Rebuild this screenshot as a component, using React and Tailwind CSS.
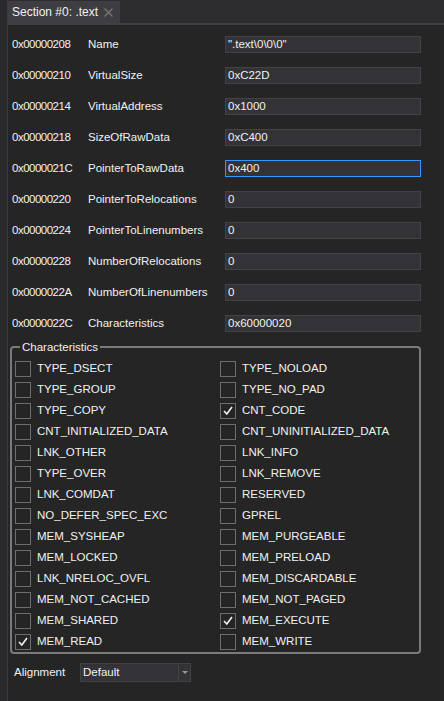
import React from 'react';

const fields = [
  ["0x00000208", "Name", "\".text\\0\\0\\0\""],
  ["0x00000210", "VirtualSize", "0xC22D"],
  ["0x00000214", "VirtualAddress", "0x1000"],
  ["0x00000218", "SizeOfRawData", "0xC400"],
  ["0x0000021C", "PointerToRawData", "0x400", true],
  ["0x00000220", "PointerToRelocations", "0"],
  ["0x00000224", "PointerToLinenumbers", "0"],
  ["0x00000228", "NumberOfRelocations", "0"],
  ["0x0000022A", "NumberOfLinenumbers", "0"],
  ["0x0000022C", "Characteristics", "0x60000020"],
];

const flags = [
  ["TYPE_DSECT", false, "TYPE_NOLOAD", false],
  ["TYPE_GROUP", false, "TYPE_NO_PAD", false],
  ["TYPE_COPY", false, "CNT_CODE", true],
  ["CNT_INITIALIZED_DATA", false, "CNT_UNINITIALIZED_DATA", false],
  ["LNK_OTHER", false, "LNK_INFO", false],
  ["TYPE_OVER", false, "LNK_REMOVE", false],
  ["LNK_COMDAT", false, "RESERVED", false],
  ["NO_DEFER_SPEC_EXC", false, "GPREL", false],
  ["MEM_SYSHEAP", false, "MEM_PURGEABLE", false],
  ["MEM_LOCKED", false, "MEM_PRELOAD", false],
  ["LNK_NRELOC_OVFL", false, "MEM_DISCARDABLE", false],
  ["MEM_NOT_CACHED", false, "MEM_NOT_PAGED", false],
  ["MEM_SHARED", false, "MEM_EXECUTE", true],
  ["MEM_READ", true, "MEM_WRITE", false],
];

const Check = ({ label, checked }) => (
  <div className="flex items-center h-[21px]">
    <div className="w-[16px] h-[16px] border border-[#6e6e6e] flex items-center justify-center">
      {checked && (
        <svg width="10" height="9" viewBox="0 0 10 9">
          <path d="M1 5 L3.8 8 L9 1" fill="none" stroke="#f1f1f1" strokeWidth="1.6" />
        </svg>
      )}
    </div>
    <span className="ml-[6px]">{label}</span>
  </div>
);

const App = () => {
  return (
    <div
      className="w-[444px] h-[701px] bg-[#252526] text-[#f1f1f1] text-[11.5px] flex overflow-hidden"
      style={{ fontFamily: '"Segoe UI", "Liberation Sans", sans-serif' }}
    >
      {/* left dock edge */}
      <div className="w-[8px] bg-[#2a2a2c] border-r border-[#3a3a3d] shrink-0" />

      <div className="flex-1 flex flex-col">
        {/* tab strip */}
        <div className="h-[25px] bg-[#2d2d30] border-b-2 border-[#3f3f46] flex items-end">
          <div className="h-[22px] w-[112px] bg-[#3e3e42] flex items-center pl-[4px] pr-[7px]">
            <span className="flex-1 leading-none text-[12px]">Section #0: .text</span>
            <svg width="9" height="9" viewBox="0 0 9 9">
              <path d="M0.5 0.5 L8.5 8.5 M8.5 0.5 L0.5 8.5" stroke="#77777b" strokeWidth="1.2" />
            </svg>
          </div>
        </div>

        {/* header fields */}
        <div className="pt-[4px]">
          {fields.map(([off, name, val, focus]) => (
            <div key={off} className="h-[31px] flex items-center">
              <span className="w-[80px] pl-[4px] tracking-[-0.5px]">{off}</span>
              <span className="w-[137px]">{name}</span>
              <div
                className={`w-[196px] h-[17px] bg-[#333337] border flex items-center pl-[2px] ${
                  focus ? 'border-[#3399ff]' : 'border-[#434346]'
                }`}
              >
                {val}
              </div>
            </div>
          ))}
        </div>

        {/* characteristics group */}
        <fieldset className="ml-[2px] w-[411px] mt-0 border-2 border-[#7a7a7a] rounded-[4px] pl-[3px] pb-0">
          <legend className="ml-[5px] px-[2px] leading-[16px]">Characteristics</legend>
          <div className="grid grid-cols-[205px_1fr] mt-[3px]">
            {flags.map(([l, lc, r, rc]) => (
              <React.Fragment key={l}>
                <Check label={l} checked={lc} />
                <Check label={r} checked={rc} />
              </React.Fragment>
            ))}
          </div>
        </fieldset>

        {/* alignment */}
        <div className="flex items-center mt-[9px] pl-[6px]">
          <span className="w-[66px]">Alignment</span>
          <div className="w-[111px] h-[19px] bg-[#333337] border border-[#434346] flex">
            <span className="flex-1 pl-[2px] leading-[17px]">Default</span>
            <div className="w-[12px] border-l border-[#434346] flex items-center justify-center">
              <svg width="6" height="3" viewBox="0 0 6 3">
                <path d="M0 0 H6 L3 3 Z" fill="#999999" />
              </svg>
            </div>
          </div>
        </div>
      </div>
    </div>
  );
};

export default App;
